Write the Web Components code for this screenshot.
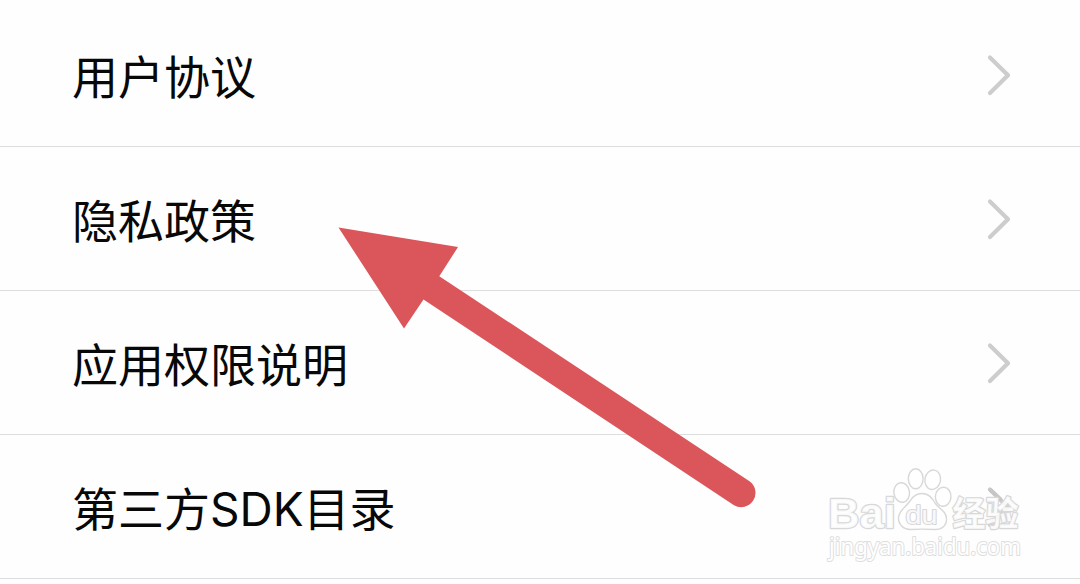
<!DOCTYPE html>
<html lang="zh-CN">
<head>
<meta charset="UTF-8">
<title>设置</title>
<style>
    body {
        margin: 0;
        height: 584px;
        overflow: hidden;
        background: #fefefe;
        color: #080808;
        font-family: Inter, "Noto Sans CJK SC", sans-serif;
    }
</style>
</head>
<body>
<lista-ajustes>
    <fila-ajuste>用户协议</fila-ajuste>
    <fila-ajuste>隐私政策</fila-ajuste>
    <fila-ajuste>应用权限说明</fila-ajuste>
    <fila-ajuste>第三方SDK目录</fila-ajuste>
</lista-ajustes>
<flecha-roja></flecha-roja>
<marca-agua></marca-agua>

<script>
class ListaAjustes extends HTMLElement {
    constructor() {
        super();
        this.attachShadow({ mode: 'open' });
        this.shadowRoot.innerHTML = `
            <style>
                :host {
                    display: flex;
                    flex-direction: column;
                    padding-top: 3px;
                }
            </style>
            <slot></slot>
        `;
    }
}

class FilaAjuste extends HTMLElement {
    constructor() {
        super();
        this.attachShadow({ mode: 'open' });
        this.shadowRoot.innerHTML = `
            <style>
                :host {
                    display: flex;
                    align-items: center;
                    justify-content: space-between;
                    box-sizing: border-box;
                    height: 144px;
                    padding: 0 67px 0 72px;
                    border-bottom: 1px solid #dedede;
                    font-size: 46px;
                    line-height: 66px;
                }
                span {
                    padding-top: 5px;
                }
                svg {
                    display: block;
                    width: 26px;
                    height: 42px;
                }
            </style>
            <span><slot></slot></span>
            <svg viewBox="0 0 26 42">
                <path d="M3 3.5 L21 21.2 L3 39" fill="none" stroke="#cdcdcd" stroke-width="4.2" stroke-linecap="round" stroke-linejoin="round"/>
            </svg>
        `;
    }
}

class FlechaRoja extends HTMLElement {
    constructor() {
        super();
        this.attachShadow({ mode: 'open' });
        this.shadowRoot.innerHTML = `
            <style>
                :host {
                    position: absolute;
                    left: 330px;
                    top: 220px;
                }
                svg {
                    display: block;
                }
            </style>
            <svg width="440" height="300" viewBox="330 220 440 300">
                <path d="M338.5 227.5 L458 247 L439.3 276.2 L749.5 481.2 A14.3 14.3 0 0 1 734 505.2 L423.5 299.5 L404 328.5 Z" fill="#db565b"/>
            </svg>
        `;
    }
}

class MarcaAgua extends HTMLElement {
    constructor() {
        super();
        this.attachShadow({ mode: 'open' });
        this.shadowRoot.innerHTML = `
            <style>
                :host {
                    position: absolute;
                    left: 820px;
                    top: 460px;
                }
                svg {
                    display: block;
                    overflow: visible;
                }
                text {
                    paint-order: stroke;
                    stroke-linejoin: round;
                }
                .logo, .huella {
                    fill: #fff;
                    fill-opacity: 0.85;
                    stroke: #d8d8d8;
                    stroke-width: 2.4;
                }
                .huella {
                    stroke-width: 1.4;
                }
                .logo {
                    font-family: "Liberation Sans", sans-serif;
                    font-weight: 700;
                }
                .cjk {
                    font-family: "Noto Sans CJK SC", sans-serif;
                }
                .url {
                    font: 23px "Noto Sans", sans-serif;
                    fill: #fff;
                    stroke: #dedede;
                    stroke-width: 2;
                }
            </style>
            <svg width="210" height="115" viewBox="0 0 210 115">
                <!-- trozo del chevron que asoma por detrás -->
                <path d="M170.5 30 L180 39" fill="none" stroke="#c6c6c6" stroke-width="4" stroke-linecap="round"/>
                <text class="logo" x="8" y="68" font-size="43" textLength="68" lengthAdjust="spacingAndGlyphs">Bai</text>
                <!-- huella -->
                <g class="huella">
                    <ellipse cx="81.7" cy="32.5" rx="7.8" ry="9.8" transform="rotate(-8 81.7 32.5)"/>
                    <ellipse cx="95.7" cy="18.8" rx="7.4" ry="10"/>
                    <ellipse cx="112.7" cy="19.8" rx="7.8" ry="9.8" transform="rotate(10 112.7 20)"/>
                    <ellipse cx="123.2" cy="36.7" rx="7.8" ry="9.5" transform="rotate(5 123 36.5)"/>
                    <path d="M102 33.5 C109 33.5 112 38 115 43 C119 49 127 51 126.5 60 C126 67 120 70 114 69.5 C106 69 99 69 91 69.5 C84 70 78.5 65 78.5 58 C79 50 86 47 90 41 C93 36 96 33.5 102 33.5 Z"/>
                </g>
                <text class="logo" x="85.5" y="63.5" font-size="26" style="font-weight:400;stroke-width:2" textLength="32" lengthAdjust="spacingAndGlyphs">du</text>
                <text class="logo cjk" x="132.5" y="66" font-size="34" textLength="66" lengthAdjust="spacingAndGlyphs">经验</text>
                <text class="url" x="9" y="94.5" textLength="192" lengthAdjust="spacingAndGlyphs">jingyan.baidu.com</text>
            </svg>
        `;
    }
}

customElements.define('lista-ajustes', ListaAjustes);
customElements.define('fila-ajuste', FilaAjuste);
customElements.define('flecha-roja', FlechaRoja);
customElements.define('marca-agua', MarcaAgua);
</script>
</body>
</html>
